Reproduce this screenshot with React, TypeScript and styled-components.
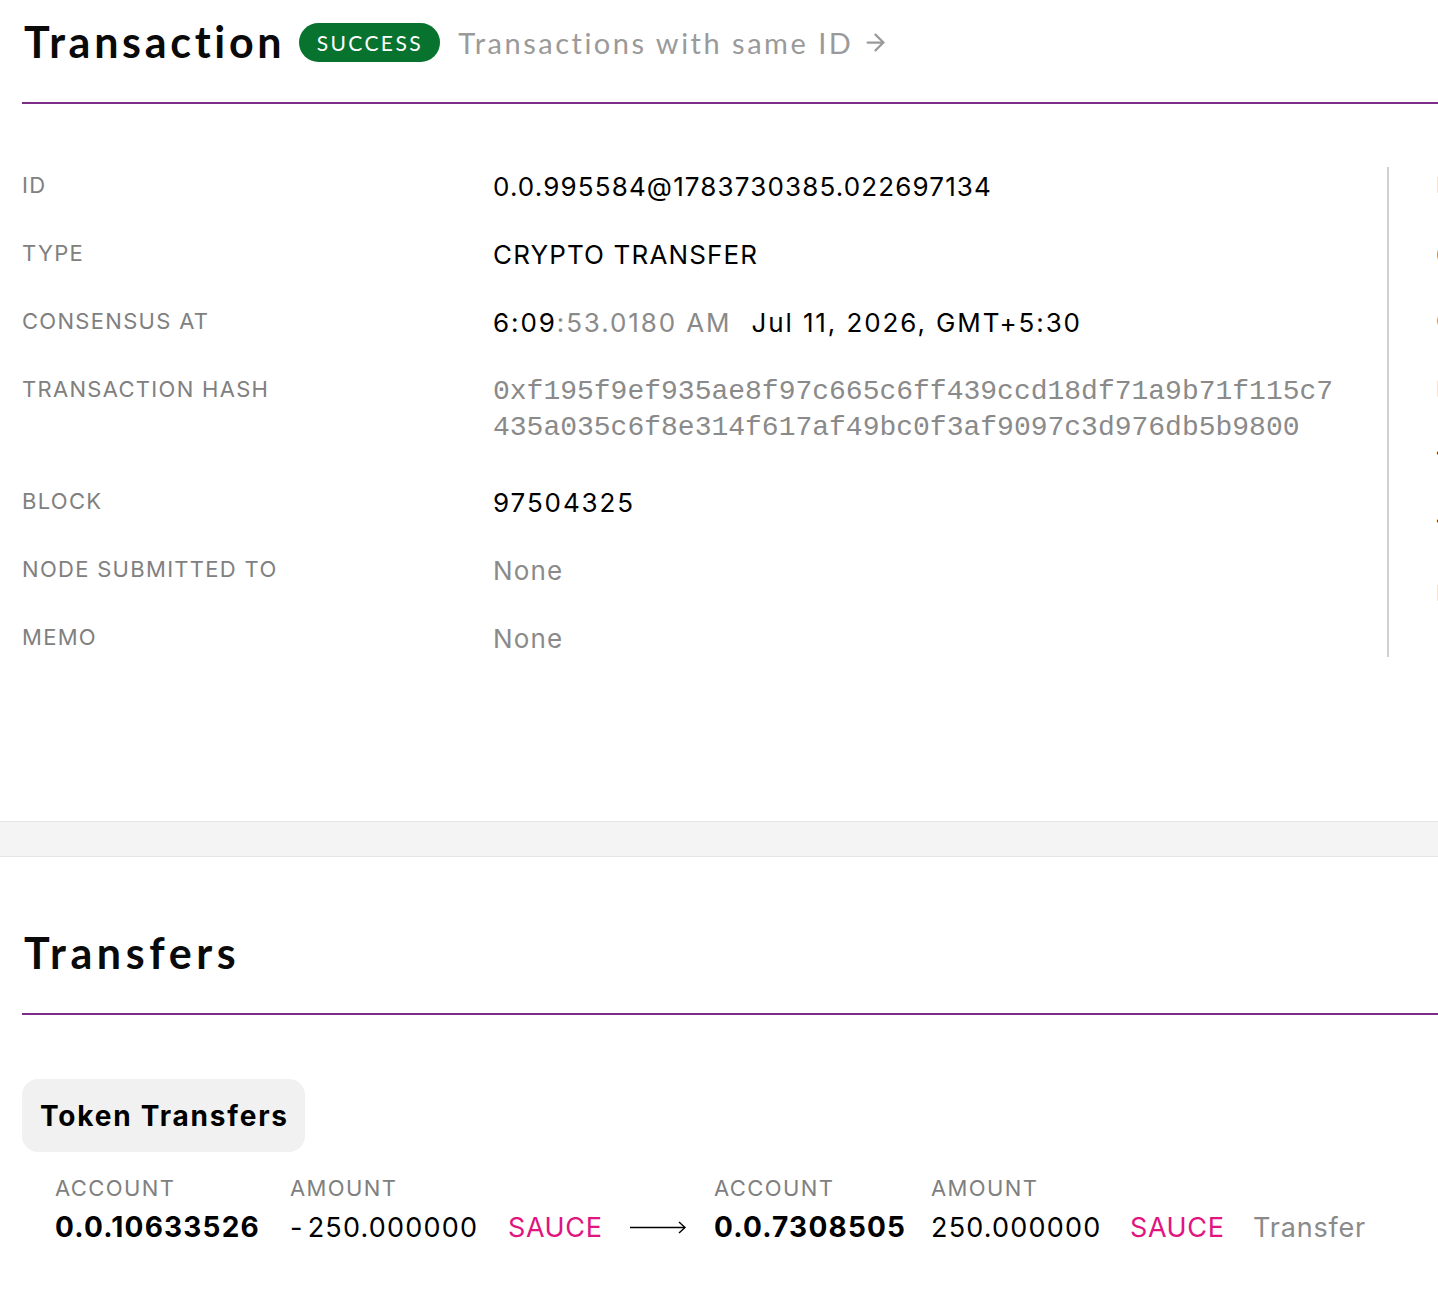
import React from "react";
import styled, { createGlobalStyle } from "styled-components";
import { ArrowRight } from "lucide-react";

const GlobalStyle = createGlobalStyle`
  html, body {
    margin: 0;
    padding: 0;
    background: #ffffff;
    overflow-x: hidden;
  }
  body {
    font-family: Inter, "Liberation Sans", sans-serif;
    color: #000;
  }
`;

const Page = styled.div`
  width: 100%;
  overflow: hidden;
`;

const Section = styled.section<{ $bottom?: number }>`
  padding: 0 0 ${(p) => p.$bottom ?? 0}px 22px;
`;

const HeaderRow = styled.div`
  display: flex;
  align-items: center;
  height: 50px;
  padding: 17px 0 35px;
  white-space: nowrap;
`;

const Title = styled.h1<{ $spacing?: number }>`
  margin: 0 0 0 2px;
  font-family: Lato, "Open Sans", sans-serif;
  font-weight: 700;
  font-size: 43px;
  line-height: 50px;
  letter-spacing: ${(p) => p.$spacing ?? 3.7}px;
  color: #0a0a0a;
`;

const Badge = styled.span`
  display: inline-flex;
  align-items: center;
  justify-content: center;
  margin-left: 14px;
  width: 141px;
  height: 39px;
  border-radius: 20px;
  background: #07732f;
  color: #fff;
  font-family: Lato, "Open Sans", sans-serif;
  font-size: 21px;
  letter-spacing: 2.4px;
`;

const SameIdLink = styled.a`
  display: inline-flex;
  align-items: center;
  gap: 9px;
  margin-left: 18px;
  font-family: Lato, "Open Sans", sans-serif;
  font-size: 29px;
  letter-spacing: 2.5px;
  color: #9a9a9a;
  text-decoration: none;
`;

const Rule = styled.div`
  height: 2px;
  background: #7d2c87;
`;

const Columns = styled.div`
  display: flex;
  margin-top: 63px;
  white-space: nowrap;
`;

const LeftCol = styled.div`
  flex: 0 0 auto;
  width: 1365px;
  display: flex;
  flex-direction: column;
  gap: 32px;
  border-right: 2px solid #d0d0d0;
  padding-bottom: 2px;
`;

const RightCol = styled.div`
  flex: 0 0 auto;
  display: flex;
  flex-direction: column;
  gap: 32px;
  padding-left: 47px;
`;

const Row = styled.div`
  display: grid;
  grid-template-columns: 471px 1fr;
  align-items: start;
`;

const Label = styled.div`
  font-size: 22px;
  line-height: 36px;
  color: #808080;
  letter-spacing: 1.3px;
`;

const Value = styled.div<{ $muted?: boolean; $wide?: boolean }>`
  font-size: 26px;
  line-height: 36px;
  padding-top: 2px;
  margin-bottom: -2px;
  color: ${(p) => (p.$muted ? "#8a8a8a" : "#000")};
  letter-spacing: ${(p) => (p.$wide ? 1.9 : 1.15)}px;
`;

const Dim = styled.span`
  color: #8a8a8a;
`;

const DateText = styled.span`
  margin-left: 20px;
`;

const Hash = styled.div`
  font-family: "Liberation Mono", "DejaVu Sans Mono", monospace;
  font-size: 28px;
  line-height: 36px;
  padding-top: 3px;
  margin-bottom: 5px;
  color: #8a8a8a;
  width: 850px;
  white-space: normal;
  word-break: break-all;
`;

const Band = styled.div`
  height: 34px;
  background: #f4f4f4;
  border-top: 1px solid #e6e6e6;
  border-bottom: 1px solid #e6e6e6;
`;

const SubHeader = styled.div`
  padding: 71px 0 35px;
`;

const Chip = styled.div`
  display: inline-flex;
  align-items: center;
  height: 73px;
  margin-top: 64px;
  padding: 0 16px 0 18px;
  border-radius: 16px;
  background: #f1f1f1;
  font-family: Inter, "Liberation Sans", sans-serif;
  font-weight: 700;
  font-size: 28px;
  letter-spacing: 1.8px;
  color: #000;
`;

const TransferGrid = styled.div`
  display: grid;
  grid-template-columns: 235px 218px 122px 84px 217px 199px 123px auto;
  grid-template-rows: 30px 36px;
  row-gap: 6px;
  margin: 21px 0 0 33px;
  align-items: center;
  white-space: nowrap;
`;

const HeadCell = styled.div`
  font-size: 22px;
  line-height: 30px;
  letter-spacing: 1.4px;
  color: #808080;
`;

const AccountCell = styled.div`
  font-size: 28px;
  font-weight: 700;
  letter-spacing: 1.2px;
  color: #000;
`;

const AmountCell = styled.div`
  font-size: 27px;
  letter-spacing: 1.2px;
  color: #000;
`;

const Minus = styled.span`
  margin-right: 4px;
`;

const TokenCell = styled.div`
  font-size: 27px;
  letter-spacing: 0.6px;
  color: #e0157f;
`;

const NoteCell = styled.div`
  font-size: 27px;
  letter-spacing: 0.8px;
  color: #8a8a8a;
`;

const ArrowCell = styled.div`
  display: flex;
  align-items: center;
  height: 36px;
`;

const LongArrow = () => (
  <svg width="57" height="16" viewBox="0 0 57 16" fill="none">
    <line x1="0" y1="8.5" x2="55" y2="8.5" stroke="#000" strokeWidth="1.4" />
    <polyline points="49,3 55,8.5 49,14" stroke="#000" strokeWidth="1.4" fill="none" />
  </svg>
);

export default function App() {
  return (
    <Page>
      <GlobalStyle />
      <Section $bottom={164}>
        <HeaderRow>
          <Title>Transaction</Title>
          <Badge>SUCCESS</Badge>
          <SameIdLink href="#">
            Transactions with same ID
            <ArrowRight size={27} strokeWidth={2} color="#9a9a9a" />
          </SameIdLink>
        </HeaderRow>
        <Rule />
        <Columns>
          <LeftCol>
            <Row>
              <Label>ID</Label>
              <Value>0.0.995584@1783730385.022697134</Value>
            </Row>
            <Row>
              <Label>TYPE</Label>
              <Value>CRYPTO TRANSFER</Value>
            </Row>
            <Row>
              <Label>CONSENSUS AT</Label>
              <Value $wide>
                6:09<Dim>:53.0180 AM</Dim>
                <DateText>Jul 11, 2026, GMT+5:30</DateText>
              </Value>
            </Row>
            <Row>
              <Label>TRANSACTION HASH</Label>
              <Hash>
                0xf195f9ef935ae8f97c665c6ff439ccd18df71a9b71f115c7435a035c6f8e314f617af49bc0f3af9097c3d976db5b9800
              </Hash>
            </Row>
            <Row>
              <Label>BLOCK</Label>
              <Value $wide>97504325</Value>
            </Row>
            <Row>
              <Label>NODE SUBMITTED TO</Label>
              <Value $muted>None</Value>
            </Row>
            <Row>
              <Label>MEMO</Label>
              <Value $muted>None</Value>
            </Row>
          </LeftCol>
          <RightCol>
            <Label>PAYER</Label>
            <Value>0.0.995584</Value>
            <Label>CHARGED FEE</Label>
            <Label>MAX FEE</Label>
            <Value>1.00000000ℏ</Value>
            <Value>120s</Value>
            <Label>NONCE</Label>
          </RightCol>
        </Columns>
      </Section>
      <Band />
      <Section $bottom={40}>
        <SubHeader>
          <Title $spacing={4.6}>Transfers</Title>
        </SubHeader>
        <Rule />
        <Chip>Token Transfers</Chip>
        <TransferGrid>
          <HeadCell>ACCOUNT</HeadCell>
          <HeadCell>AMOUNT</HeadCell>
          <div />
          <div />
          <HeadCell>ACCOUNT</HeadCell>
          <HeadCell>AMOUNT</HeadCell>
          <div />
          <div />
          <AccountCell>0.0.10633526</AccountCell>
          <AmountCell>
            <Minus>-</Minus>250.000000
          </AmountCell>
          <TokenCell>SAUCE</TokenCell>
          <ArrowCell>
            <LongArrow />
          </ArrowCell>
          <AccountCell>0.0.7308505</AccountCell>
          <AmountCell>250.000000</AmountCell>
          <TokenCell>SAUCE</TokenCell>
          <NoteCell>Transfer</NoteCell>
        </TransferGrid>
      </Section>
    </Page>
  );
}
